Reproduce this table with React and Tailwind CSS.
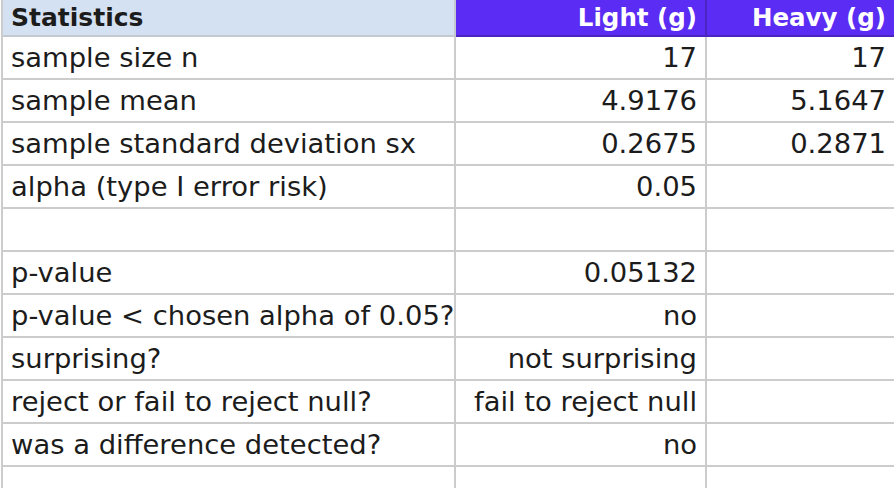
import React from 'react';

const rows = [
  ['sample size n', '17', '17'],
  ['sample mean', '4.9176', '5.1647'],
  ['sample standard deviation sx', '0.2675', '0.2871'],
  ['alpha (type I error risk)', '0.05', ''],
  ['', '', ''],
  ['p-value', '0.05132', ''],
  ['p-value < chosen alpha of 0.05?', 'no', ''],
  ['surprising?', 'not surprising', ''],
  ['reject or fail to reject null?', 'fail to reject null', ''],
  ['was a difference detected?', 'no', ''],
  ['', '', ''],
];

export default function App() {
  return (
    <div
      className="w-[894px] h-[488px] overflow-hidden bg-white text-[#1c1c1c]"
      style={{ fontFamily: '"DejaVu Sans", "Noto Sans", sans-serif' }}
    >
      <div className="ml-[1px] border-l-2 border-[#cccccc] grid grid-cols-[453px_251px_1fr] text-[27.4px]">
        <div className="h-[37px] bg-[#d4e1f2] border-b-2 border-r-2 border-[#c4c9d0] pl-2 font-bold text-[25px] leading-[36px]">
          Statistics
        </div>
        <div className="h-[37px] bg-[#5b2cf3] border-b-2 border-r-2 border-[#4a25c0] pr-2 text-right text-white font-bold text-[24.5px] leading-[36px]">
          Light (g)
        </div>
        <div className="h-[37px] bg-[#5b2cf3] border-b-2 border-[#4a25c0] pr-2 text-right text-white font-bold text-[24.5px] leading-[36px]">
          Heavy (g)
        </div>
        {rows.map((r, i) => (
          <React.Fragment key={i}>
            <div className="h-[43px] border-b-2 border-r-2 border-[#cccccc] pl-2 leading-[41px] whitespace-nowrap">
              {r[0]}
            </div>
            <div className="h-[43px] border-b-2 border-r-2 border-[#cccccc] pr-2 text-right leading-[41px] whitespace-nowrap">
              {r[1]}
            </div>
            <div className="h-[43px] border-b-2 border-[#cccccc] pr-2 text-right leading-[41px] whitespace-nowrap">
              {r[2]}
            </div>
          </React.Fragment>
        ))}
      </div>
    </div>
  );
}
